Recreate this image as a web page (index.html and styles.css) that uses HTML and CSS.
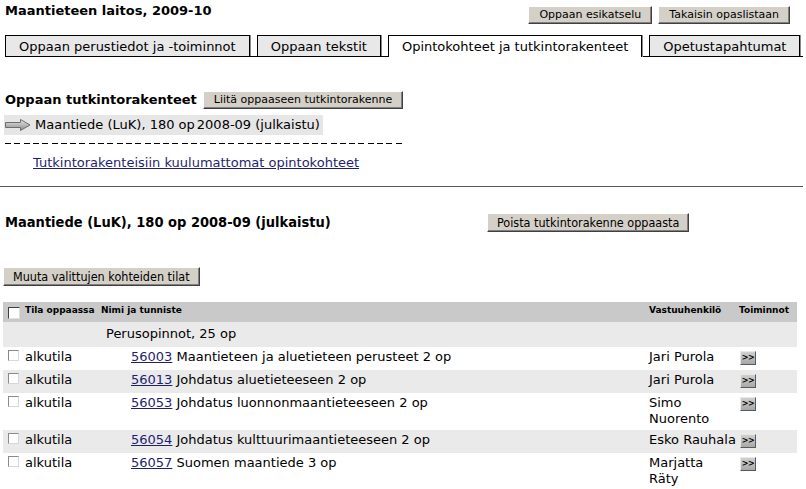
FILE: index.html
```html
<!DOCTYPE html>
<html lang="fi">
<head>
<meta charset="utf-8">
<title>Maantieteen laitos, 2009-10</title>
<link rel="stylesheet" href="styles.css">
</head>
<body>
<div class="page">
  <div class="topbar">
    <h1 class="title">Maantieteen laitos, 2009-10</h1>
    <div class="topbtns">
      <button class="btn">Oppaan esikatselu</button>
      <button class="btn">Takaisin opaslistaan</button>
    </div>
  </div>

  <div class="tabs">
    <span class="tab">Oppaan perustiedot ja -toiminnot</span>
    <span class="tab">Oppaan tekstit</span>
    <span class="tab active">Opintokohteet ja tutkintorakenteet</span>
    <span class="tab">Opetustapahtumat</span>
  </div>

  <div class="sect-head">
    <span class="sect-title">Oppaan tutkintorakenteet</span>
    <button class="btn">Liitä oppaaseen tutkintorakenne</button>
  </div>
  <div class="struct-row">
    <svg class="arrow" width="26" height="12" viewBox="0 0 26 12">
      <defs>
        <linearGradient id="ag" x1="0" y1="0" x2="0" y2="1">
          <stop offset="0" stop-color="#e8e8e8"/>
          <stop offset="1" stop-color="#8a8a8a"/>
        </linearGradient>
      </defs>
      <polygon points="0.5,3.5 15.5,3.5 15.5,0.5 25,6 15.5,11.5 15.5,8.5 0.5,8.5" fill="url(#ag)" stroke="#6e6e6e" stroke-width="1"/>
    </svg>
    <span>Maantiede (LuK), 180 op</span><span>2008-09 (julkaistu)</span>
  </div>
  <div class="dashed"></div>
  <a class="other-link" href="#">Tutkintorakenteisiin kuulumattomat opintokohteet</a>

  <hr class="rule">

  <div class="detail-head">
    <h2 class="detail-title">Maantiede (LuK), 180 op 2008-09 (julkaistu)</h2>
    <button class="btn narrow">Poista tutkintorakenne oppaasta</button>
  </div>

  <button class="btn narrow change-btn">Muuta valittujen kohteiden tilat</button>

  <table class="courses">
    <colgroup>
      <col class="c-state">
      <col class="c-name">
      <col class="c-person">
      <col class="c-actions">
    </colgroup>
    <thead>
      <tr>
        <th class="th-state"><span class="cb cb-head"></span>Tila oppaassa</th>
        <th class="th-name">Nimi ja tunniste</th>
        <th class="th-person">Vastuuhenkilö</th>
        <th class="th-actions">Toiminnot</th>
      </tr>
    </thead>
    <tbody>
      <tr class="group">
        <td></td>
        <td class="group-name">Perusopinnot, 25 op</td>
        <td></td>
        <td></td>
      </tr>
      <tr>
        <td class="state"><span class="cb"></span>alkutila</td>
        <td class="name"><a href="#">56003</a> Maantieteen ja aluetieteen perusteet 2 op</td>
        <td class="person">Jari Purola</td>
        <td class="actions"><span class="go">&gt;&gt;</span></td>
      </tr>
      <tr class="alt">
        <td class="state"><span class="cb"></span>alkutila</td>
        <td class="name"><a href="#">56013</a> Johdatus aluetieteeseen 2 op</td>
        <td class="person">Jari Purola</td>
        <td class="actions"><span class="go">&gt;&gt;</span></td>
      </tr>
      <tr>
        <td class="state"><span class="cb"></span>alkutila</td>
        <td class="name"><a href="#">56053</a> Johdatus luonnonmaantieteeseen 2 op</td>
        <td class="person">Simo Nuorento</td>
        <td class="actions"><span class="go">&gt;&gt;</span></td>
      </tr>
      <tr class="alt">
        <td class="state"><span class="cb"></span>alkutila</td>
        <td class="name"><a href="#">56054</a> Johdatus kulttuurimaantieteeseen 2 op</td>
        <td class="person">Esko&nbsp;Rauhala</td>
        <td class="actions"><span class="go">&gt;&gt;</span></td>
      </tr>
      <tr>
        <td class="state"><span class="cb"></span>alkutila</td>
        <td class="name"><a href="#">56057</a> Suomen maantiede 3 op</td>
        <td class="person">Marjatta Räty</td>
        <td class="actions"><span class="go">&gt;&gt;</span></td>
      </tr>
      <tr class="alt spacer">
        <td></td><td></td><td></td><td></td>
      </tr>
    </tbody>
  </table>
</div>
</body>
</html>
```

FILE: styles.css
```css
html, body {
  margin: 0;
  padding: 0;
  background: #ffffff;
}

body {
  font-family: "DejaVu Sans", Verdana, sans-serif;
  font-size: 13px;
  line-height: 16px;
  color: #000000;
}

.page {
  padding-top: 3px;
  width: 806px;
}

/* buttons */
.btn {
  font-family: "DejaVu Sans", Verdana, sans-serif;
  font-size: 11px;
  line-height: 14px;
  height: 18px;
  padding: 0 10px;
  margin: 0;
  color: #000;
  background: #d4d0c8;
  border: 1px solid;
  border-color: #ffffff #404040 #404040 #ffffff;
  box-shadow: inset -1px -1px 0 #808080;
  border-radius: 0;
  white-space: nowrap;
}

.btn.narrow {
  font-family: "DejaVu Sans Condensed", "DejaVu Sans", sans-serif;
  font-stretch: condensed;
  font-size: 12.5px;
  height: 19px;
  padding: 0 9px;
}

/* top bar */
.topbar {
  display: flex;
  justify-content: space-between;
  align-items: flex-start;
  padding: 0 16px 0 5px;
  height: 21px;
}

.title {
  margin: 0;
  font-size: 13px;
  line-height: 16px;
  font-weight: bold;
}

.topbtns {
  display: flex;
  gap: 6px;
  margin-top: 3px;
}

/* tabs */
.tabs {
  display: flex;
  gap: 7px;
  margin: 11px 3px 0 5px;
  border-bottom: 1px solid #000;
  height: 21px;
}

.tab {
  display: block;
  height: 21px;
  box-sizing: border-box;
  padding: 3px 13px 1px;
  line-height: 16px;
  background: #e8e8e8;
  border: 1px solid #000;
  border-bottom: none;
  box-shadow: 1px 0 0 #8a8a8a;
  white-space: nowrap;
}

.tab.active {
  background: #ffffff;
  height: 22px;
}

/* structures */
.sect-head {
  display: flex;
  align-items: center;
  gap: 6px;
  margin-top: 34px;
  padding-left: 5px;
}

.sect-title {
  font-weight: bold;
}

.struct-row {
  display: inline-flex;
  align-items: center;
  gap: 2px;
  margin: 6px 0 0 4px;
  height: 20px;
  padding-right: 3px;
  background: #e6e6e6;
  white-space: nowrap;
}

.arrow {
  display: block;
  margin: 0 2px 0 1px;
}

.dashed {
  margin: 8px 0 0 5px;
  width: 397px;
  height: 1px;
  background: repeating-linear-gradient(90deg, #000 0 6px, transparent 6px 9.3px);
}

.other-link {
  display: inline-block;
  margin: 11px 0 0 33px;
  color: #1f1f70;
}

.rule {
  margin: 15px 3px 0 0;
  height: 0;
  border: none;
  border-top: 1px solid #555;
}

/* detail */
.detail-head {
  display: flex;
  align-items: center;
  margin-top: 26px;
  padding-left: 5px;
}

.detail-title {
  flex: 0 0 482px;
  margin: 0;
  font-family: "DejaVu Sans Condensed", "DejaVu Sans", sans-serif;
  font-stretch: condensed;
  font-size: 14.5px;
  font-weight: bold;
  line-height: 17px;
}

.change-btn {
  display: block;
  margin: 35px 0 0 3px;
}

/* table */
.courses {
  margin: 16px 0 0 3px;
  border-collapse: collapse;
  table-layout: fixed;
  width: 794px;
}

.c-state { width: 97px; }
.c-name { width: 546px; }
.c-person { width: 91px; }
.c-actions { width: 60px; }

.courses th {
  background: #c9c9c9;
  font-size: 9px;
  line-height: 12px;
  font-weight: bold;
  text-align: left;
  vertical-align: top;
  height: 20px;
  box-sizing: border-box;
  padding: 2px 0 0 0;
  white-space: nowrap;
}

.th-state { padding-left: 5px !important; }
.th-name { padding-left: 1px !important; }
.th-person { padding-left: 3px !important; }
.th-actions { padding-left: 2px !important; }

.courses td {
  vertical-align: top;
  padding: 2px 0 3px 0;
  line-height: 16px;
}

.courses tr.alt td,
.courses tr.group td {
  background: #eaeaea;
}

.courses tr.group td {
  padding: 4px 0 5px;
}

.group-name {
  padding-left: 6px !important;
}

.state {
  padding-left: 5px !important;
  white-space: nowrap;
}

.name {
  padding-left: 31px !important;
}

.name a {
  color: #1f1f70;
}

.person {
  padding-left: 3px !important;
  padding-right: 2px !important;
}

.actions {
  padding-left: 3px !important;
}

.spacer td {
  height: 14px;
  padding: 0;
}

/* checkboxes */
.cb {
  display: inline-block;
  box-sizing: border-box;
  width: 11px;
  height: 11px;
  margin: 1px 6px 0 0;
  vertical-align: top;
  background: #ffffff;
  border: 1px solid;
  border-color: #8a8a8a #d8d8d8 #d8d8d8 #8a8a8a;
}

.cb-head {
  width: 12px;
  height: 12px;
  margin: 3px 5px 0 0;
  border-color: #404040 #e0e0e0 #e0e0e0 #404040;
}

/* action button */
.go {
  display: inline-block;
  box-sizing: border-box;
  width: 16px;
  height: 14px;
  margin: 2px 0;
  font-size: 8px;
  line-height: 12px;
  font-weight: bold;
  text-align: center;
  letter-spacing: -0.5px;
  background: linear-gradient(#d0d0d0, #a8a8a8);
  border: 1px solid;
  border-color: #e8e8e8 #5a5a5a #5a5a5a #e8e8e8;
  vertical-align: top;
}
```
